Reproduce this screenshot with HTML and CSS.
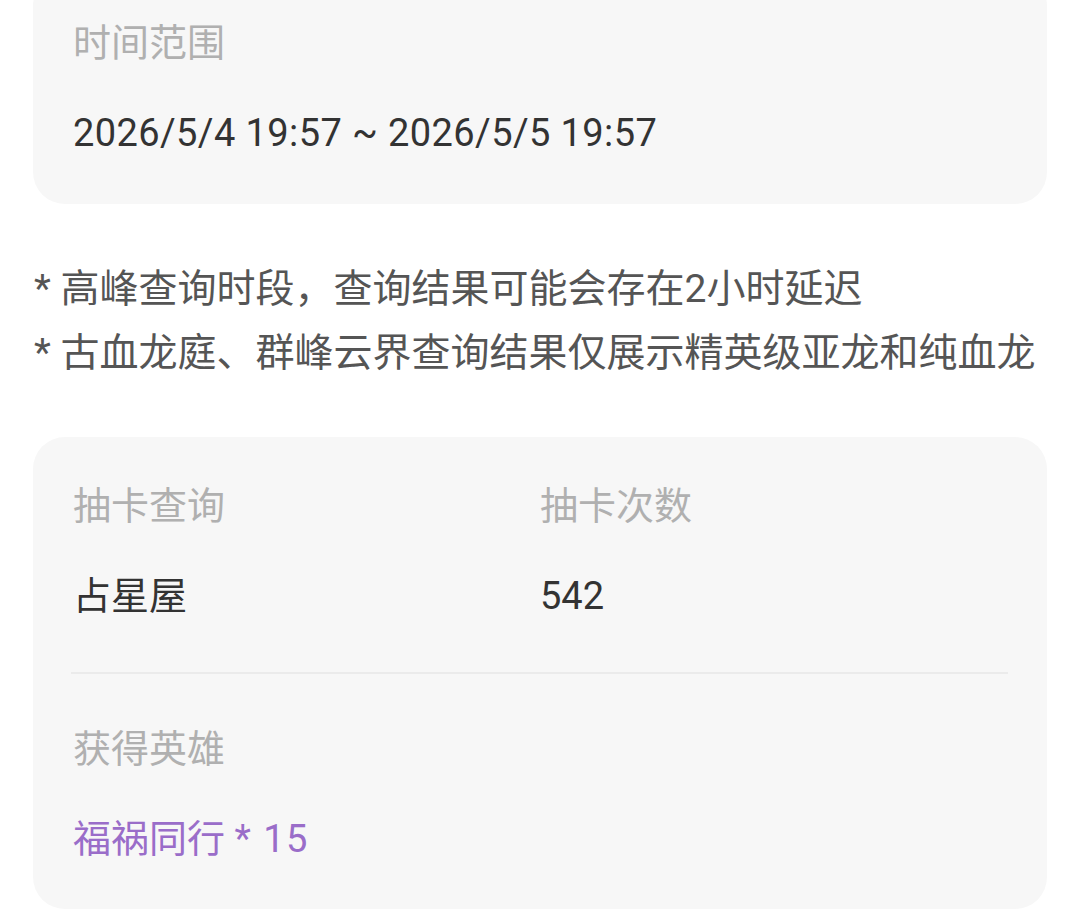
FILE: index.html
```html
<!DOCTYPE html>
<html lang="zh-CN">
<head>
<meta charset="utf-8">
<title>抽卡查询</title>
<link rel="stylesheet" href="styles.css">
</head>
<body>
<div class="page">
  <section class="card card-time">
    <div class="label">时间范围</div>
    <div class="value date">2026/5/4 19:57 ~ 2026/5/5 19:57</div>
  </section>

  <div class="notes">
    <p>* 高峰查询时段，查询结果可能会存在2小时延迟</p>
    <p>* 古血龙庭、群峰云界查询结果仅展示精英级亚龙和纯血龙</p>
  </div>

  <section class="card card-result">
    <div class="grid">
      <div class="cell">
        <div class="label">抽卡查询</div>
        <div class="value">占星屋</div>
      </div>
      <div class="cell">
        <div class="label">抽卡次数</div>
        <div class="value">542</div>
      </div>
    </div>
    <div class="divider"></div>
    <div class="cell">
      <div class="label">获得英雄</div>
      <div class="value hero">福祸同行 <span class="num">* 15</span></div>
    </div>
  </section>
</div>
</body>
</html>
```

FILE: styles.css
```css
html, body {
  margin: 0;
  padding: 0;
  background: #ffffff;
}

body {
  font-family: Roboto, "Noto Sans CJK SC", sans-serif;
  font-size: 38px;
  color: #333333;
  overflow: hidden;
}

.page {
  width: 1080px;
  padding: 0 33px;
  box-sizing: border-box;
}

.card {
  background: #f7f7f7;
  border-radius: 32px;
  padding: 0 40px;
}

.label {
  color: #b0b0b0;
  line-height: 52px;
}

.value {
  color: #333333;
  line-height: 52px;
  margin-top: 38px;
}

.date {
  letter-spacing: 0.4px;
}

.card-time {
  margin-top: -26px;
  padding-top: 43px;
  padding-bottom: 45px;
}

.notes {
  margin-top: 53px;
  padding-left: 1px;
}

.notes p {
  margin: 0;
  font-size: 39px;
  line-height: 64px;
  color: #555555;
  white-space: nowrap;
}

.card-result {
  margin-top: 52px;
  padding-top: 43px;
  padding-bottom: 44px;
}

.grid {
  display: grid;
  grid-template-columns: 1fr 1fr;
}

.divider {
  height: 2px;
  background: #ebebeb;
  margin: 50px -1px 49px -2px;
}

.hero {
  color: #9a6dc9;
}

.hero .num {
  letter-spacing: 1.5px;
}
```
